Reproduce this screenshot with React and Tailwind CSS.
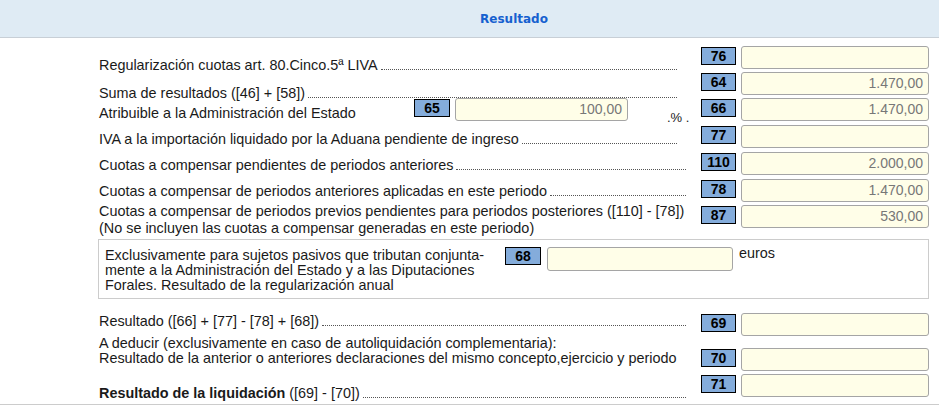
import React from "react";

const Field = ({ n, v, w = "w-[188px]" }) => (
  <div className="flex items-start shrink-0">
    <div className="mt-px w-[35px] h-[18px] border border-black bg-[#84acdb] text-center font-bold text-[14px] leading-[16px] text-black">
      {n}
    </div>
    <div className={`ml-[5px] ${w} h-[23px] rounded-[3px] border border-[#a5a5a5] bg-[#fffee8] text-right pr-[5px] text-[14px] leading-[21px] text-[#777]`}>
      {v}
    </div>
  </div>
);

const Label = ({ text, top, dots = "mr-[24px]", bold }) => (
  <div className={`flex-1 min-w-0 flex items-end h-[16px] ${top}`}>
    <span className="whitespace-nowrap leading-[16px]">
      {bold && <b>{bold} </b>}
      {text}
    </span>
    <span className={`flex-1 ml-[3px] mb-[3px] border-b border-dotted border-[#555] ${dots}`} />
  </div>
);

const App = () => {
  return (
    <div className="w-[939px] h-[406px] bg-white overflow-hidden text-[14.4px] text-[#1a1a1a]" style={{ fontFamily: '"Liberation Sans", Arial, sans-serif' }}>
      {/* Header */}
      <div className="h-[38px] bg-[#dfebf4] border-b border-[#c8cfd6] flex items-center justify-center pl-[89px]">
        <span className="font-bold text-[12px] text-[#1660cf]" style={{ fontFamily: '"DejaVu Sans", Verdana, sans-serif' }}>
          Resultado
        </span>
      </div>

      <div className="pl-[99px] pr-[10px] pt-[8px] pb-[7px] border-b border-[#cccccc]">
        <div className="flex h-[26px]">
          <Label text="Regularización cuotas art. 80.Cinco.5ª LIVA" top="mt-[11px]" />
          <Field n="76" v="" />
        </div>
        <div className="flex h-[26px]">
          <Label text="Suma de resultados ([46] + [58])" top="mt-[13px]" />
          <Field n="64" v="1.470,00" />
        </div>
        <div className="flex h-[27px]">
          <div className="flex-1 flex items-start">
            <span className="w-[315px] mt-[7px] leading-[16px] whitespace-nowrap">Atribuible a la Administración del Estado</span>
            <div className="mt-px w-[36px] h-[18px] border border-black bg-[#84acdb] text-center font-bold text-[14px] leading-[16px] text-black">65</div>
            <div className="ml-[5px] w-[173px] h-[23px] rounded-[3px] border border-[#a5a5a5] bg-[#fffee8] text-right pr-[5px] text-[14px] leading-[21px] text-[#777]">100,00</div>
            <span className="ml-[39px] mt-[12px] leading-[16px] text-[13px] whitespace-nowrap">.% .</span>
          </div>
          <Field n="66" v="1.470,00" />
        </div>
        <div className="flex h-[27px]">
          <Label text="IVA a la importación liquidado por la Aduana pendiente de ingreso" top="mt-[6px]" />
          <Field n="77" v="" />
        </div>
        <div className="flex h-[27px]">
          <Label text="Cuotas a compensar pendientes de periodos anteriores" top="mt-[5px]" dots="mr-[15px]" />
          <Field n="110" v="2.000,00" />
        </div>
        <div className="flex h-[26px]">
          <Label text="Cuotas a compensar de periodos anteriores aplicadas en este periodo" top="mt-[4px]" dots="mr-[15px]" />
          <Field n="78" v="1.470,00" />
        </div>
        <div className="flex h-[34px]">
          <div className="flex-1 min-w-0 -mt-[2px] leading-[17px] whitespace-nowrap">
            Cuotas a compensar de periodos previos pendientes para periodos posteriores ([110] - [78])
            <br />
            (No se incluyen las cuotas a compensar generadas en este periodo)
          </div>
          <Field n="87" v="530,00" />
        </div>

        {/* Diputaciones Forales box */}
        <div className="-ml-px h-[60px] border border-[#cccccc] flex items-start pt-[7px] pl-[6px]">
          <div className="w-[400px] pt-px leading-[15px] whitespace-nowrap">
            Exclusivamente para sujetos pasivos que tributan conjunta-
            <br />
            mente a la Administración del Estado y a las Diputaciones
            <br />
            Forales. Resultado de la regularización anual
          </div>
          <div className="w-[36px] h-[18px] border border-black bg-[#84acdb] text-center font-bold text-[14px] leading-[16px] text-black">68</div>
          <div className="ml-[6px] w-[186px] h-[24px] rounded-[3px] border border-[#a5a5a5] bg-[#fffee8]" />
          <span className="ml-[6px] -mt-[2px] leading-[16px]">euros</span>
        </div>

        <div className="flex h-[35px] mt-[14px]">
          <Label text="Resultado ([66] + [77] - [78] + [68])" top="mt-0" dots="mr-[15px]" />
          <Field n="69" v="" />
        </div>
        <div className="flex h-[26px]">
          <div className="flex-1 min-w-0 -mt-[12px] leading-[15px] whitespace-nowrap">
            A deducir (exclusivamente en caso de autoliquidación complementaria):
            <br />
            Resultado de la anterior o anteriores declaraciones del mismo concepto,ejercicio y periodo
          </div>
          <Field n="70" v="" />
        </div>
        <div className="flex h-[23px]">
          <Label bold="Resultado de la liquidación" text="([69] - [70])" top="mt-[11px]" dots="mr-[15px]" />
          <Field n="71" v="" />
        </div>
      </div>
    </div>
  );
};

export default App;
